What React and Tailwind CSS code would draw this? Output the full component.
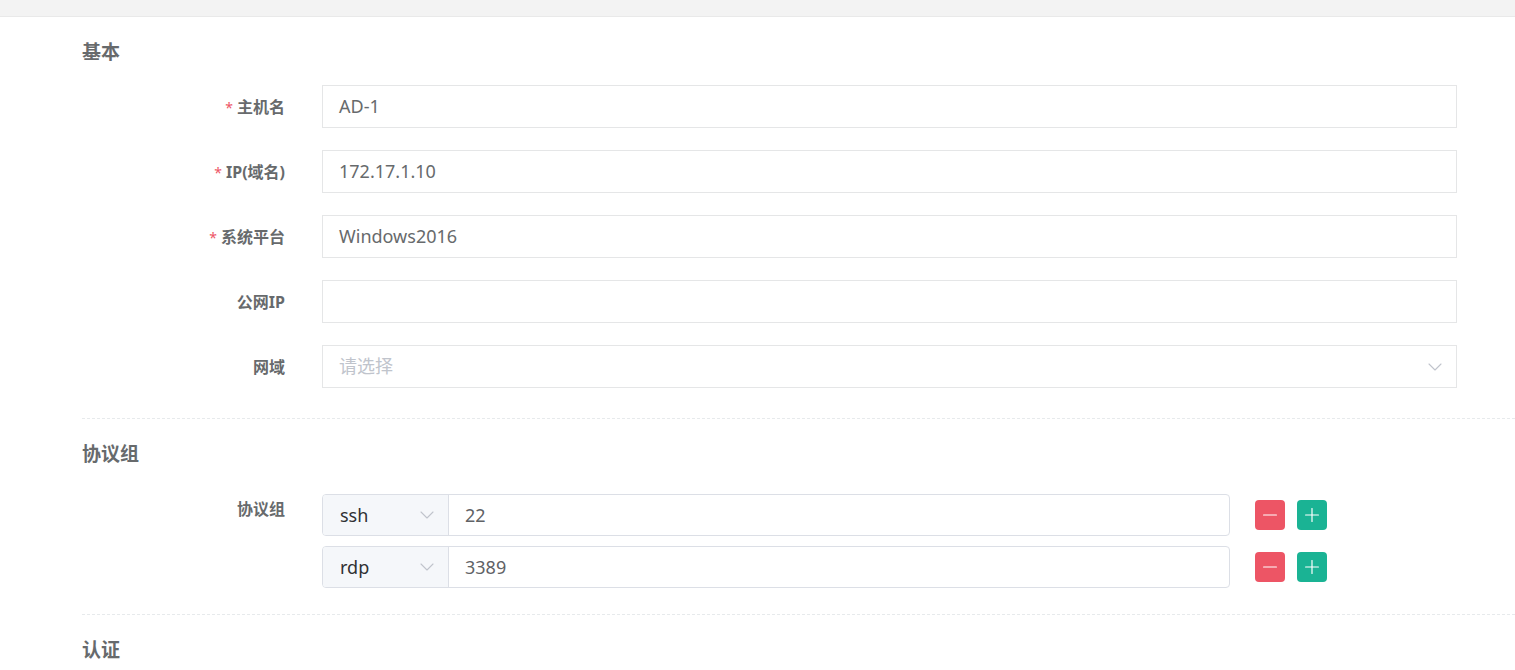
import { ChevronDown, Minus, Plus } from "lucide-react";

const fields = [
  { label: "主机名", value: "AD-1", required: true },
  { label: "IP(域名)", value: "172.17.1.10", required: true },
  { label: "系统平台", value: "Windows2016", required: true },
  { label: "公网IP", value: "", required: false },
];

const protocols = [
  { name: "ssh", port: "22" },
  { name: "rdp", port: "3389" },
];

const App = () => {
  return (
    <div className="min-h-screen bg-white text-[#676a6c] font-['Noto_Sans','Noto_Sans_CJK_SC',sans-serif]">
      {/* top strip */}
      <div className="h-[17px] bg-[#f3f3f3] border-b border-[#e9e9e9]" />

      <div className="pl-[82px]">
        {/* 基本 */}
        <div className="pt-[21px] pb-[30px] border-b border-dashed border-[#e7eaec]">
          <h3 className="text-[19px] leading-[28px] font-bold">基本</h3>
          <div className="mt-[19px] pr-[58px] flex flex-col gap-[22px]">
            {fields.map((f) => (
              <div key={f.label} className="flex items-center">
                <label className="w-[203px] shrink-0 text-right text-[16px] font-bold">
                  {f.required && <span className="text-[#ed5565] mr-[4px] text-[14px] font-normal">*</span>}
                  {f.label}
                </label>
                <div className="ml-[37px] flex-1 h-[43px] border border-[#e5e6e7] flex items-center px-[16px] text-[18px]">
                  {f.value}
                </div>
              </div>
            ))}
            <div className="flex items-center">
              <label className="w-[203px] shrink-0 text-right text-[16px] font-bold">网域</label>
              <div className="ml-[37px] flex-1 h-[43px] border border-[#e5e6e7] flex items-center justify-between pl-[16px] pr-[9px] text-[18px]">
                <span className="text-[#c0c4cc]">请选择</span>
                <ChevronDown className="w-[24px] h-[24px] text-[#c0c4cc]" strokeWidth={1.1} />
              </div>
            </div>
          </div>
        </div>

        {/* 协议组 */}
        <div className="pt-[21px] pb-[26px] border-b border-dashed border-[#e7eaec]">
          <h3 className="text-[19px] leading-[28px] font-bold">协议组</h3>
          <div className="mt-[26px] flex">
            <label className="w-[203px] shrink-0 text-right text-[16px] font-bold leading-[24px] pt-[3px]">协议组</label>
            <div className="ml-[37px] flex flex-col gap-[10px]">
              {protocols.map((p) => (
                <div key={p.name} className="flex items-center">
                  <div className="w-[908px] h-[42px] flex border border-[#dcdfe6] rounded-[4px] overflow-hidden">
                    <div className="w-[126px] bg-[#f5f7fa] border-r border-[#dcdfe6] flex items-center justify-between pl-[17px] pr-[9px] text-[18px] text-[#303133]">
                      <span>{p.name}</span>
                      <ChevronDown className="w-[24px] h-[24px] text-[#c0c4cc]" strokeWidth={1.1} />
                    </div>
                    <div className="flex-1 flex items-center px-[16px] text-[18px] text-[#606266]">{p.port}</div>
                  </div>
                  <button className="ml-[25px] w-[30px] h-[30px] rounded-[4px] bg-[#ed5565] flex items-center justify-center text-white">
                    <Minus className="w-[22px] h-[22px]" strokeWidth={1.3} />
                  </button>
                  <button className="ml-[12px] w-[30px] h-[30px] rounded-[4px] bg-[#1ab394] flex items-center justify-center text-white">
                    <Plus className="w-[22px] h-[22px]" strokeWidth={1.3} />
                  </button>
                </div>
              ))}
            </div>
          </div>
        </div>

        {/* 认证 */}
        <div className="pt-[21px]">
          <h3 className="text-[19px] leading-[28px] font-bold">认证</h3>
        </div>
      </div>
    </div>
  );
};

export default App;
